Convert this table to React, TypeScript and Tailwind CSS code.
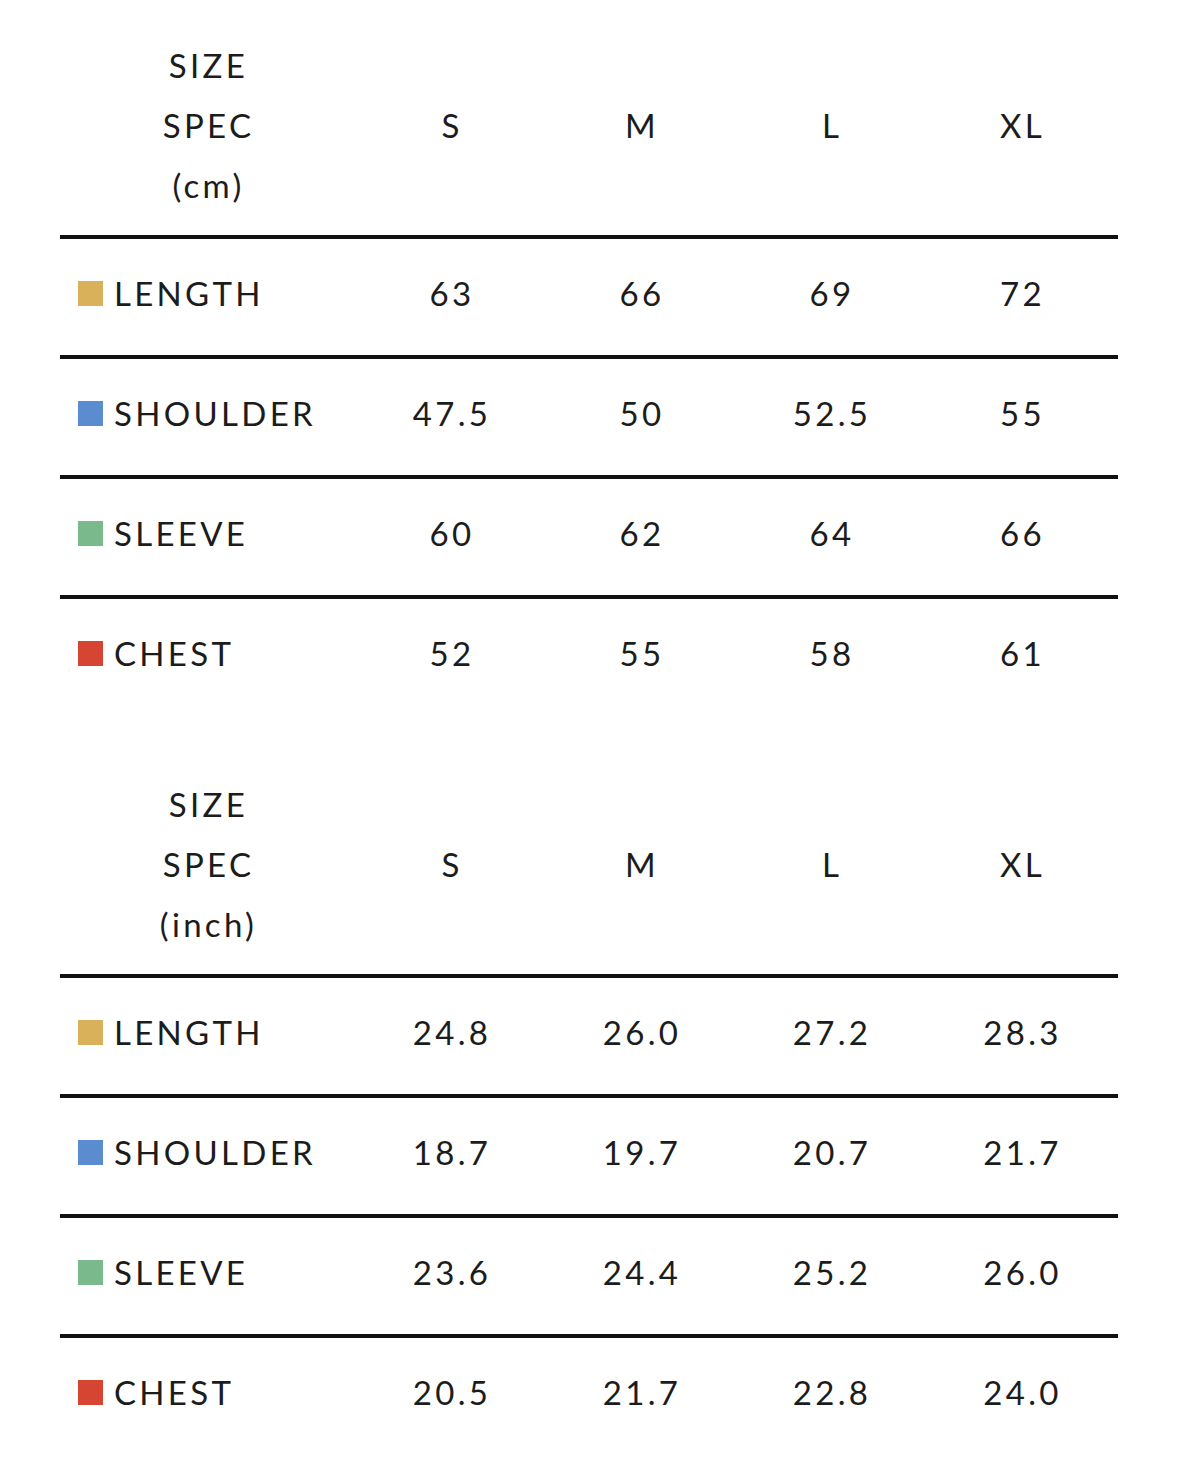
import React from 'react';

type Row = { label: string; color: string; values: string[] };

const SIZES = ['S', 'M', 'L', 'XL'];

const CM_ROWS: Row[] = [
  { label: 'LENGTH', color: 'bg-[#d9b15a]', values: ['63', '66', '69', '72'] },
  { label: 'SHOULDER', color: 'bg-[#5b8ccf]', values: ['47.5', '50', '52.5', '55'] },
  { label: 'SLEEVE', color: 'bg-[#79b98b]', values: ['60', '62', '64', '66'] },
  { label: 'CHEST', color: 'bg-[#d64531]', values: ['52', '55', '58', '61'] },
];

const INCH_ROWS: Row[] = [
  { label: 'LENGTH', color: 'bg-[#d9b15a]', values: ['24.8', '26.0', '27.2', '28.3'] },
  { label: 'SHOULDER', color: 'bg-[#5b8ccf]', values: ['18.7', '19.7', '20.7', '21.7'] },
  { label: 'SLEEVE', color: 'bg-[#79b98b]', values: ['23.6', '24.4', '25.2', '26.0'] },
  { label: 'CHEST', color: 'bg-[#d64531]', values: ['20.5', '21.7', '22.8', '24.0'] },
];

const SizeTable: React.FC<{ unit: string; rows: Row[]; className?: string }> = ({ unit, rows, className }) => {
  return (
    <div className={className}>
      {/* header */}
      <div className="grid grid-cols-[297px_190px_190px_190px_191px] pt-[35px] pb-[20px] border-b-4 border-[#111]">
        <div className="flex flex-col items-center leading-[60px]">
          <span>SIZE</span>
          <span>SPEC</span>
          <span>({unit})</span>
        </div>
        {SIZES.map((s) => (
          <div key={s} className="flex items-center justify-center leading-[60px]">
            {s}
          </div>
        ))}
      </div>

      {/* rows */}
      {rows.map((row, i) => (
        <div
          key={row.label}
          className={`grid grid-cols-[297px_190px_190px_190px_191px] h-[120px] items-center pb-[7px] ${
            i < rows.length - 1 ? 'border-b-4 border-[#111]' : 'border-b-4 border-transparent'
          }`}
        >
          <div className="flex items-center gap-[11px] pl-[18px]">
            <span className={`w-[25px] h-[25px] shrink-0 ${row.color}`}></span>
            <span>{row.label}</span>
          </div>
          {row.values.map((v, j) => (
            <div key={j} className="text-center">
              {v}
            </div>
          ))}
        </div>
      ))}
    </div>
  );
};

const App: React.FC = () => {
  return (
    <div className="w-[1179px] h-[1476px] bg-white text-[#1c1c1c] font-['Lato',sans-serif] text-[33px] tracking-[0.1em] overflow-hidden">
      <div className="ml-[60px] w-[1058px]">
        <SizeTable unit="cm" rows={CM_ROWS} />
        <SizeTable unit="inch" rows={INCH_ROWS} className="mt-[20px]" />
      </div>
    </div>
  );
};

export default App;
